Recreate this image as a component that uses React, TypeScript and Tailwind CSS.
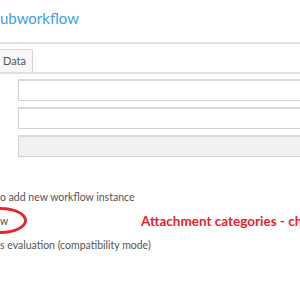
export default function App() {
  return (
    <div className="relative h-[300px] w-[300px] overflow-hidden bg-white font-['Lato',sans-serif]">
      <div className="w-[360px]">
        <div className="h-[42px] pt-[5px] text-[15px] leading-[26px] text-[#3a9fe6]">ubworkflow</div>
        <div className="h-[2px] bg-[#e2e2e2]" />

        <div className="mt-[5px] flex border-b-2 border-[#e0e0e0]">
          <div className="-ml-px flex h-[23px] w-[34px] items-center border border-b-0 border-[#d6d6d6] bg-[#f7f7f7] pl-[3px] text-[11px] text-[#555]">
            Data
          </div>
        </div>

        <div className="ml-[18px] mt-[5px] flex flex-col gap-[6px]">
          <div className="h-[22px] border border-t-2 border-[#d2d2d2] border-t-[#d9d9d9] bg-white" />
          <div className="h-[22px] border border-t-2 border-[#d2d2d2] border-t-[#d9d9d9] bg-white" />
          <div className="h-[22px] border border-t-2 border-[#d2d2d2] border-t-[#d9d9d9] bg-[#f1f1f1]" />
        </div>

        <div className="mt-[28px] text-[10.5px] leading-[24px] text-[#555]">
          <div className="whitespace-nowrap">o add new workflow instance</div>
          <div className="flex whitespace-nowrap">
            <span className="w-[141px] shrink-0">w</span>
            <span className="shrink-0 text-[13.5px] font-bold text-[#e8232b]">Attachment categories - ch</span>
          </div>
          <div className="whitespace-nowrap">s evaluation (compatibility mode)</div>
        </div>
      </div>

      <div className="absolute left-[-26px] top-[207px] h-[27px] w-[53px] rounded-[50%] border-[3px] border-[#e3262b]" />
    </div>
  );
}
